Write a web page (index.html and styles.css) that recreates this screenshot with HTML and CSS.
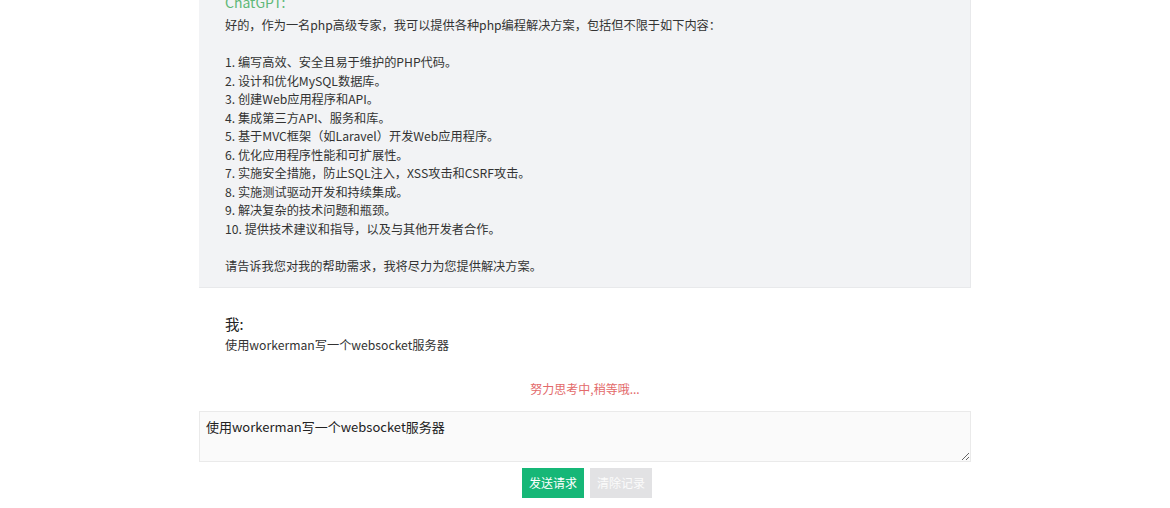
FILE: index.html
```html
<!DOCTYPE html>
<html lang="zh-CN">
<head>
<meta charset="utf-8">
<title>ChatGPT</title>
<link rel="stylesheet" href="styles.css">
</head>
<body>
<div class="container">
  <div class="msg msg-bot">
    <div class="msg-title">ChatGPT:</div>
    <div class="msg-body">好的，作为一名php高级专家，我可以提供各种php编程解决方案，包括但不限于如下内容：

1. 编写高效、安全且易于维护的PHP代码。
2. 设计和优化MySQL数据库。
3. 创建Web应用程序和API。
4. 集成第三方API、服务和库。
5. 基于MVC框架（如Laravel）开发Web应用程序。
6. 优化应用程序性能和可扩展性。
7. 实施安全措施，防止SQL注入，XSS攻击和CSRF攻击。
8. 实施测试驱动开发和持续集成。
9. 解决复杂的技术问题和瓶颈。
10. 提供技术建议和指导，以及与其他开发者合作。

请告诉我您对我的帮助需求，我将尽力为您提供解决方案。</div>
  </div>
  <div class="msg msg-me">
    <div class="msg-title me-title">我:</div>
    <div class="msg-body">使用workerman写一个websocket服务器</div>
  </div>
  <div class="thinking">努力思考中,稍等哦...</div>
  <textarea class="input">使用workerman写一个websocket服务器</textarea>
  <div class="actions">
    <button class="btn btn-send">发送请求</button>
    <button class="btn btn-clear" disabled>清除记录</button>
  </div>
</div>
</body>
</html>
```

FILE: styles.css
```css
html, body {
  margin: 0;
  padding: 0;
  background: #fff;
  overflow: hidden;
}
body {
  font-family: "Noto Sans CJK SC", "Noto Sans", "Liberation Sans", sans-serif;
  color: #333;
  font-size: 12px;
}
.container {
  width: 772px;
  margin: -19px auto 0;
}
.msg {
  padding: 10px 26px 12px;
}
.msg-bot {
  background: #f2f3f5;
  border-right: 1px solid #e8e9eb;
  border-bottom: 1px solid #e8e9eb;
}
.msg-title {
  font-size: 14px;
  line-height: 22px;
  color: #5fb878;
}
.msg-body {
  font-size: 12.2px;
  line-height: 18.5px;
  white-space: pre-wrap;
  margin-top: 3px;
}
.msg-me {
  padding-top: 25px;
  padding-bottom: 0;
}
.me-title {
  color: #222;
  font-size: 14.5px;
}
.msg-me .msg-body {
  margin-top: 1px;
}
.thinking {
  text-align: center;
  color: #e36a6a;
  font-size: 12px;
  line-height: 18px;
  margin-top: 25px;
}
.input {
  display: block;
  box-sizing: border-box;
  width: 772px;
  height: 51px;
  margin: 13px 0 0;
  padding: 6px 6px;
  border: 1px solid #eaeaea;
  background: #fafafa;
  font-family: "Noto Sans CJK SC", "Noto Sans", "Liberation Sans", sans-serif;
  font-size: 13px;
  line-height: 18px;
  color: #222;
  outline: none;
}
.actions {
  display: flex;
  justify-content: center;
  gap: 6px;
  margin-top: 6px;
  padding-left: 4px;
}
.btn {
  height: 30px;
  padding: 0 7px;
  border: none;
  font-family: "Noto Sans CJK SC", "Noto Sans", sans-serif;
  font-size: 12px;
  line-height: 30px;
  color: #fff;
  cursor: pointer;
}
.btn-send {
  background: #16b777;
}
.btn-clear {
  background: #e2e2e4;
  color: #fbfbfb;
  cursor: not-allowed;
}
```
